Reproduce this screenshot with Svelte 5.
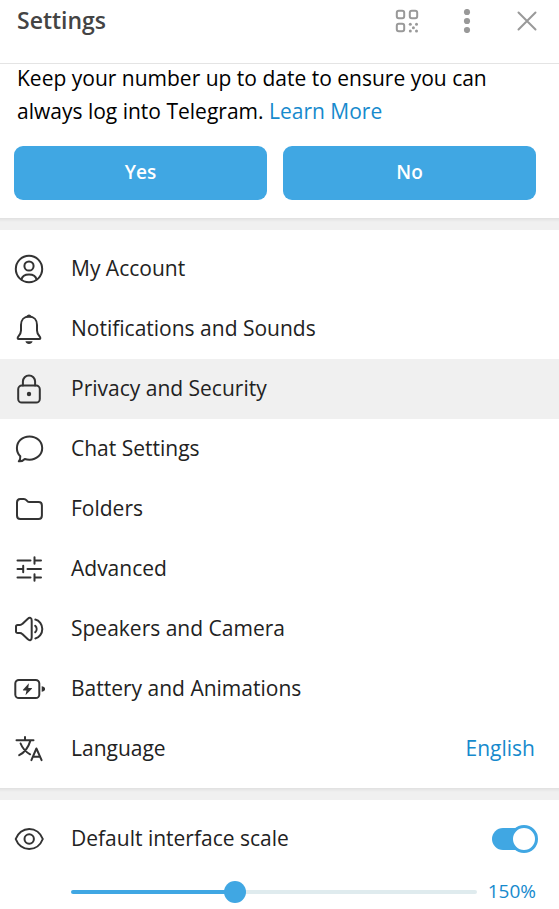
<script>
    const items = [
        { icon: 'account', label: 'My Account' },
        { icon: 'bell', label: 'Notifications and Sounds' },
        { icon: 'lock', label: 'Privacy and Security' },
        { icon: 'chat', label: 'Chat Settings' },
        { icon: 'folder', label: 'Folders' },
        { icon: 'sliders', label: 'Advanced' },
        { icon: 'speaker', label: 'Speakers and Camera' },
        { icon: 'battery', label: 'Battery and Animations' },
        { icon: 'language', label: 'Language', value: 'English' }
    ];

    const minScale = 100;
    const maxScale = 225;

    let active = $state('lock');
    let defaultScale = $state(true);
    let scale = $state(150);
    let filled = $derived(((scale - minScale) / (maxScale - minScale)) * 100);
</script>

{#snippet icon(name)}
    <svg class="icon" viewBox="0 0 32 32" aria-hidden="true">
        {#if name === 'account'}
            <circle cx="16" cy="16" r="13.2" />
            <circle cx="16" cy="13" r="4.6" />
            <path d="M8.4 26.4C9.2 23 12 21.4 16 21.4s6.8 1.6 7.6 5" />
        {:else if name === 'bell'}
            <path d="M16 3.6C11 3.6 8 7.2 8 12v5.5c0 2.5-.7 3.6-2.4 5.7C4.2 25 4.4 26 6 26h20c1.6 0 1.8-1 .4-2.8C24.7 21.100 24 20 24 17.500V12c0-4.800-3-8.400-8-8.400z" />
            <path class="solid" d="M12.800 4.400C13.600 2.500 14.800 1.600 16 1.600s2.400.9 3.200 2.800zM12.400 28.200h7.200c-.5 1.700-1.800 2.700-3.600 2.700s-3.100-1-3.600-2.700z" />
        {:else if name === 'lock'}
            <rect x="5.2" y="12.6" width="21.6" height="17" rx="3.6" />
            <path d="M9.900 12.400V8.500a6.100 6.100 0 0 1 12.200 0v3.900" />
            <circle class="solid" cx="16" cy="21" r="2.2" />
        {:else if name === 'chat'}
            <path d="M16.500 3.400C9.300 3.400 3.900 8.400 3.900 15c0 3.500 1.500 6.500 3.400 8.300.1 1.900-.2 3.900-1.500 5 2.200.3 4.400-.6 6-2.300 1.500.5 3 .7 4.700.7 7.200 0 12.700-5.100 12.700-11.700S23.700 3.400 16.500 3.400z" />
        {:else if name === 'folder'}
            <path d="M4 9.500C4 7 5 6 7.200 6h3.600c1.300 0 2 .4 2.800 1.300l.7.800c.6.700 1.200.9 2.200.9h9c2.400 0 3.400 1.100 3.400 3.400v10.100c0 2.300-1.100 3.500-3.400 3.500H7.400C5.100 26 4 24.800 4 22.500z" />
        {:else if name === 'sliders'}
            <path d="M4.500 7.400h13M21.500 7.400h6.500M21.500 4.200v6.600M4.500 16H10M10.200 12.700v6.600M14.500 16H28M4.500 24.400h13M21.500 24.400h6.500M21.500 21.200v6.600" />
        {:else if name === 'speaker'}
            <path d="M3 13.600c0-1.100.6-1.700 1.700-1.700h2.200c1 0 1.700-.3 2.400-1l5.300-5c2.200-2 4.100-1.200 4.100 1.500v17.200c0 2.700-1.900 3.500-4.100 1.500l-5.300-5c-.7-.7-1.400-1-2.400-1H4.700c-1.100 0-1.700-.6-1.700-1.700z" />
            <path d="M22.200 12.700c1.900 1.900 1.900 4.700 0 6.600M22.300 6.600c3.900.8 7 4.700 7 9.400s-3.100 8.600-7 9.400" />
        {:else if name === 'battery'}
            <rect x="2.3" y="7" width="24" height="18" rx="3.6" />
            <path class="solid" d="M28.700 13.300c2.200.2 3.400 1.300 3.400 2.700s-1.200 2.500-3.400 2.700zM15.900 10.300l-5.900 6.400c-.3.400-.1.800.3.800h3.200l-1 4.700 6.400-6.400c.4-.4.2-.9-.3-.9h-3.300z" />
        {:else if name === 'language'}
            <path d="M12 4v3.200M3.500 7.200h17M17.400 7.600C15.500 14 12 19.200 6.200 22.200M7.600 10.500c1.800 4.700 5 8.300 9.500 10.800" />
            <path d="M18.400 27.200l5-11.700 5.200 11.700M20.200 23.800h6.600" />
        {:else if name === 'eye'}
            <path d="M2.700 16C4.800 10.200 10 6 16.200 6s11.400 4.200 13.600 10c-2.200 5.800-7.400 10-13.600 10S4.800 21.800 2.700 16z" />
            <circle cx="16.2" cy="16" r="4.7" />
        {/if}
    </svg>
{/snippet}

<div class="settings">
    <header>
        <h1>Settings</h1>
        <button class="tool" aria-label="QR code">
            <svg viewBox="0 0 24 24">
                <rect x="1.8" y="1.8" width="7.4" height="7.4" rx="2" />
                <rect x="14.8" y="1.8" width="7.4" height="7.4" rx="2" />
                <rect x="1.8" y="14.8" width="7.4" height="7.4" rx="2" />
                <g class="dots">
                    <circle cx="15.3" cy="15.3" r="1.5" />
                    <circle cx="21.5" cy="15.3" r="1.5" />
                    <circle cx="18.4" cy="18.7" r="1.5" />
                    <circle cx="15.3" cy="22" r="1.5" />
                    <circle cx="21.5" cy="22" r="1.5" />
                </g>
            </svg>
        </button>
        <button class="tool" aria-label="More">
            <svg viewBox="0 0 24 24">
                <g class="dots">
                    <circle cx="12" cy="3" r="3.1" />
                    <circle cx="12" cy="12" r="3.1" />
                    <circle cx="12" cy="21" r="3.1" />
                </g>
            </svg>
        </button>
        <button class="tool" aria-label="Close">
            <svg viewBox="0 0 24 24">
                <path d="M3.500 3.500l17 17M20.500 3.500l-17 17" />
            </svg>
        </button>
    </header>

    <section class="notice">
        <p>Keep your number up to date to ensure you can always log into Telegram. <a href="#learn">Learn More</a></p>
        <div class="answers">
            <button>Yes</button>
            <button>No</button>
        </div>
    </section>

    <nav>
        {#each items as item}
            <button class="row" class:active={active === item.icon} onclick={() => (active = item.icon)}>
                {@render icon(item.icon)}
                <span class="label">{item.label}</span>
                {#if item.value}
                    <span class="value">{item.value}</span>
                {/if}
            </button>
        {/each}
    </nav>

    <section class="scale">
        <label class="row">
            {@render icon('eye')}
            <span class="label">Default interface scale</span>
            <input class="switch" type="checkbox" bind:checked={defaultScale} />
        </label>
        <div class="range">
            <input
                id="scale"
                type="range"
                aria-label="Interface scale"
                min={minScale}
                max={maxScale}
                step="25"
                bind:value={scale}
                style="--filled: {filled}%"
            />
            <output for="scale">{scale}%</output>
        </div>
    </section>
</div>

<style>
    :global(body) {
        background: #fff;
    }

    .settings {
        font-family: 'Open Sans', sans-serif;
        font-size: 21px;
        line-height: 33px;
        color: #222;
    }

    button {
        margin: 0;
        border: 0;
        font: inherit;
        color: inherit;
        cursor: pointer;
    }

    header {
        display: flex;
        align-items: center;
        padding: 0 2px 21px 17px;
        border-bottom: 1px solid #e4e4e4;
    }

    h1 {
        flex: 1;
        margin: 0;
        padding-bottom: 2px;
        font-size: 23px;
        font-weight: 600;
        color: #444;
    }

    .tool {
        display: flex;
        align-items: center;
        justify-content: center;
        width: 60px;
        height: 42px;
        padding: 0;
        background: none;
    }

    .tool svg {
        width: 24px;
        height: 24px;
        fill: none;
        stroke: #999;
        stroke-width: 2;
        stroke-linecap: round;
    }

    .tool .dots {
        fill: #999;
        stroke: none;
    }

    .notice {
        padding: 0 23px 18px 14px;
    }

    p {
        margin: -2px 0 0;
        padding: 0 3px 18px;
        color: #000;
    }

    a {
        color: #168acd;
        text-decoration: none;
    }

    .answers {
        display: flex;
        gap: 16px;
    }

    .answers button {
        flex: 1;
        height: 54px;
        padding: 0 0 2px;
        border-radius: 9px;
        background: #40a7e3;
        color: #fff;
        font-size: 19px;
        font-weight: 600;
    }

    /* grey gap with a soft shadow above each block */
    nav,
    .scale {
        padding: 21px 0 9px;
        background: linear-gradient(#e0e0e0, #f0f0f0 4px, #f0f0f0 12px, #fff 12px);
    }

    .row {
        display: flex;
        align-items: center;
        box-sizing: border-box;
        width: 100%;
        height: 60px;
        padding: 0 22px 0 13px;
        background: none;
        text-align: left;
        cursor: pointer;
    }

    .row.active {
        background: #f0f0f0;
    }

    .icon {
        flex: none;
        width: 32px;
        height: 32px;
        margin-right: 26px;
        fill: none;
        stroke: #333;
        stroke-width: 2;
        stroke-linecap: round;
        stroke-linejoin: round;
    }

    .solid {
        fill: #333;
        stroke: none;
    }

    .label {
        flex: 1;
        padding-bottom: 2px;
    }

    .value {
        padding: 0 2px 2px 0;
        color: #168acd;
    }

    .switch {
        appearance: none;
        position: relative;
        width: 45px;
        height: 22px;
        margin: 0;
        border-radius: 11px;
        background: #b3b3b3;
    }

    .switch::before {
        content: '';
        position: absolute;
        top: -3px;
        left: 0;
        box-sizing: border-box;
        width: 28px;
        height: 28px;
        border: 3px solid #b3b3b3;
        border-radius: 50%;
        background: #fff;
    }

    .switch:checked {
        background: #40a7e3;
    }

    .switch:checked::before {
        left: auto;
        right: -1px;
        border-color: #40a7e3;
    }

    .range {
        display: flex;
        align-items: center;
        gap: 11px;
        padding: 6px 23px 0 71px;
    }

    .range input {
        appearance: none;
        flex: 1;
        min-width: 0;
        height: 22px;
        margin: 0;
        background: none;
    }

    .range input::-webkit-slider-runnable-track {
        height: 4px;
        border-radius: 2px;
        background: linear-gradient(to right, #40a7e3 var(--filled), #dfebee var(--filled));
    }

    .range input::-webkit-slider-thumb {
        appearance: none;
        width: 22px;
        height: 22px;
        margin-top: -9px;
        border-radius: 50%;
        background: #40a7e3;
    }

    output {
        min-width: 48px;
        font-size: 19px;
        text-align: right;
        color: #168acd;
    }
</style>
